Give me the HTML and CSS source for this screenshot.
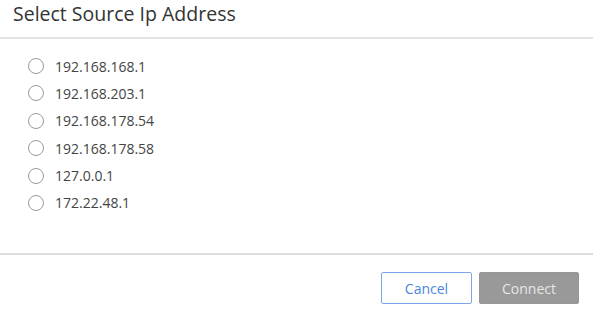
FILE: index.html
```html
<!DOCTYPE html>
<html>
<head>
<meta charset="utf-8">
<link rel="stylesheet" href="styles.css">
</head>
<body>
<div class="dialog">
  <div class="header">Select Source Ip Address</div>
  <div class="body">
    <label class="opt"><span class="radio"></span><span class="lbl">192.168.168.1</span></label>
    <label class="opt"><span class="radio"></span><span class="lbl">192.168.203.1</span></label>
    <label class="opt"><span class="radio"></span><span class="lbl">192.168.178.54</span></label>
    <label class="opt"><span class="radio"></span><span class="lbl">192.168.178.58</span></label>
    <label class="opt"><span class="radio"></span><span class="lbl">127.0.0.1</span></label>
    <label class="opt"><span class="radio"></span><span class="lbl">172.22.48.1</span></label>
  </div>
  <div class="footer">
    <button class="btn cancel">Cancel</button>
    <button class="btn connect">Connect</button>
  </div>
</div>
</body>
</html>
```
FILE: styles.css
```css
html, body { margin: 0; padding: 0; background: #fff; }
body { font-family: "Open Sans", "Noto Sans", sans-serif; width: 593px; height: 312px; overflow: hidden; }
.dialog { display: flex; flex-direction: column; }
.header {
  height: 39px;
  box-sizing: border-box;
  padding: 0 0 0 13px;
  font-size: 19.5px;
  line-height: 28px;
  color: #333;
  border-bottom: 2px solid #e2e2e2;
}
.body {
  height: 216px;
  box-sizing: border-box;
  padding: 17px 0 0 28px;
  display: flex;
  flex-direction: column;
  gap: 7.4px;
  border-bottom: 2px solid #dcdcdc;
}
.opt { display: flex; align-items: center; height: 20px; }
.radio {
  width: 14px; height: 14px;
  border: 1.5px solid #9a9a9a;
  border-radius: 50%;
  margin-right: 11px;
}
.lbl { font-size: 14px; color: #444; }
.footer {
  display: flex;
  justify-content: flex-end;
  gap: 7px;
  padding: 17px 14px 0 0;
}
.btn {
  height: 32px;
  font-family: inherit;
  font-size: 14px;
  border-radius: 2px;
  box-sizing: border-box;
}
.cancel { width: 91px; background: #fff; color: #4a86e0; border: 1px solid #7aa6ea; }
.connect { width: 100px; background: #999; color: #e6e6e6; border: 1px solid #969696; }
```
